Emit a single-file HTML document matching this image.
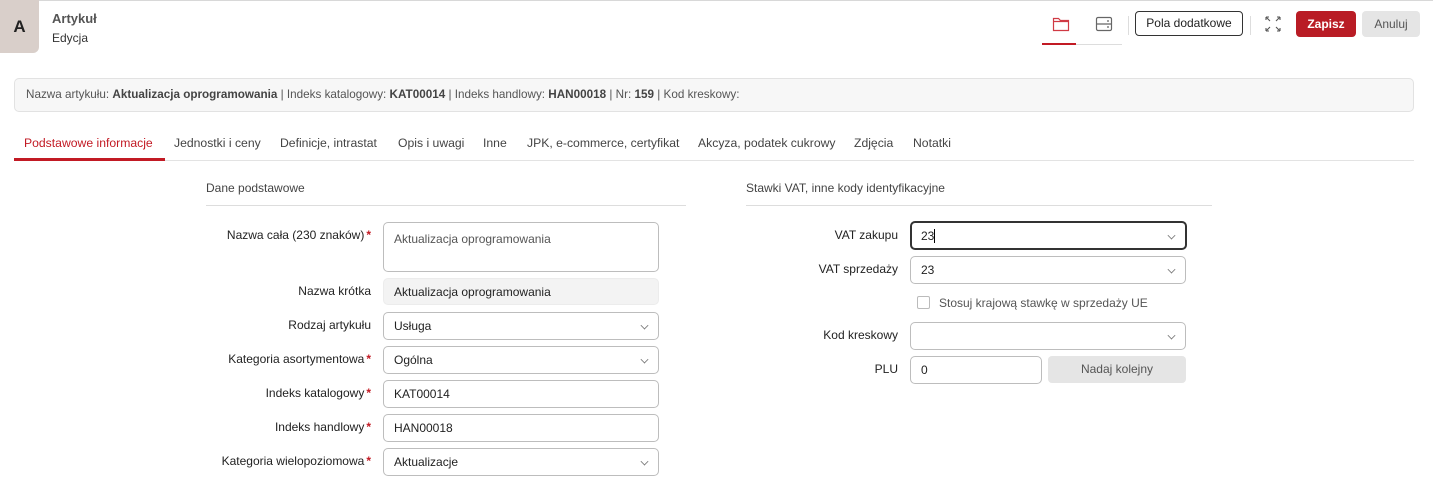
<!DOCTYPE html>
<html><head><meta charset="utf-8"><style>
*{margin:0;padding:0;box-sizing:border-box}
body{width:1433px;height:493px;overflow:hidden;background:#fff;font-family:"Liberation Sans",sans-serif;font-size:12px;color:#333;position:relative}
.a{position:absolute;white-space:nowrap}
.lbl{position:absolute;text-align:right;color:#222;white-space:nowrap}
.req{color:#c21a24;font-weight:bold;margin-left:2px}
.in{position:absolute;border:1px solid #bdbdbd;border-radius:5px;background:#fff;padding-left:10px;display:flex;align-items:center;color:#222}
.chev{position:absolute;right:10px;top:50%;margin-top:-4px;width:7px;height:7px;border-right:1px solid #777;border-bottom:1px solid #777;transform:rotate(45deg) scale(.8)}
.tab{position:absolute;top:136px;color:#444;font-size:12.2px}
</style></head><body>
<div class="a" style="left:0;top:0;width:1433px;height:1px;background:#d8d8d8"></div>
<div class="a" style="left:0;top:0;width:39px;height:53px;background:#d9cfca;border-bottom-right-radius:6px;font-weight:bold;font-size:17px;color:#222;text-align:center;line-height:53px">A</div>
<div class="a" style="left:52px;top:11px;font-weight:bold;font-size:13px;color:#555">Artykuł</div>
<div class="a" style="left:52px;top:31px;font-size:12px;color:#333">Edycja</div>

<svg class="a" style="left:1052px;top:16px" width="18" height="16" viewBox="0 0 18 16"><path d="M1.5 2.5h5l2 2h8v10h-15z M1.5 5.5h15" fill="none" stroke="#d03a44" stroke-width="1.2"/></svg>
<svg class="a" style="left:1095px;top:16px" width="18" height="16" viewBox="0 0 18 16"><rect x="1.5" y="1.5" width="15" height="13" rx="1.5" fill="none" stroke="#666" stroke-width="1.2"/><path d="M1.5 8h15M12 5h2M12 11h2" stroke="#666" stroke-width="1.2"/></svg>
<div class="a" style="left:1042px;top:43px;width:34px;height:2px;background:#c21a24"></div>
<div class="a" style="left:1076px;top:44px;width:46px;height:1px;background:#ddd"></div>
<div class="a" style="left:1128px;top:16px;width:1px;height:19px;background:#ddd"></div>
<div class="a" style="left:1135px;top:11px;width:108px;height:25px;border:1px solid #333;border-radius:4px;text-align:center;line-height:23px;font-size:12px;color:#222">Pola dodatkowe</div>
<div class="a" style="left:1250px;top:16px;width:1px;height:19px;background:#ddd"></div>
<svg class="a" style="left:1264px;top:15px" width="18" height="18" viewBox="0 0 18 18"><path d="M2 2l4 4M2 2v3M2 2h3 M16 2l-4 4M16 2v3M16 2h-3 M2 16l4-4M2 16v-3M2 16h3 M16 16l-4-4M16 16v-3M16 16h-3" fill="none" stroke="#555" stroke-width="1.1"/></svg>
<div class="a" style="left:1296px;top:11px;width:60px;height:26px;background:#b91c25;border-radius:4px;color:#fff;font-weight:bold;text-align:center;line-height:26px;font-size:12px">Zapisz</div>
<div class="a" style="left:1362px;top:11px;width:58px;height:26px;background:#e5e5e5;border-radius:4px;color:#555;text-align:center;line-height:26px;font-size:12px">Anuluj</div>

<div class="a" style="left:14px;top:78px;width:1400px;height:34px;background:#f7f7f7;border:1px solid #e2e2e2;border-radius:5px;padding-left:11px;line-height:32px;font-size:11.7px;color:#555">Nazwa artykułu: <b style="color:#444">Aktualizacja oprogramowania</b> | Indeks katalogowy: <b style="color:#444">KAT00014</b> | Indeks handlowy: <b style="color:#444">HAN00018</b> | Nr: <b style="color:#444">159</b> | Kod kreskowy:</div>

<div class="tab" style="left:24px;color:#c21a24">Podstawowe informacje</div>
<div class="tab" style="left:174px">Jednostki i ceny</div>
<div class="tab" style="left:280px">Definicje, intrastat</div>
<div class="tab" style="left:398px">Opis i uwagi</div>
<div class="tab" style="left:483px">Inne</div>
<div class="tab" style="left:527px">JPK, e-commerce, certyfikat</div>
<div class="tab" style="left:698px">Akcyza, podatek cukrowy</div>
<div class="tab" style="left:854px">Zdjęcia</div>
<div class="tab" style="left:913px">Notatki</div>
<div class="a" style="left:14px;top:160px;width:1400px;height:1px;background:#e3e3e3"></div>
<div class="a" style="left:14px;top:158px;width:151px;height:3px;background:#c21a24"></div>

<div class="a" style="left:206px;top:181px;color:#444">Dane podstawowe</div>
<div class="a" style="left:206px;top:205px;width:480px;height:1px;background:#ddd"></div>
<div class="a" style="left:746px;top:181px;color:#444">Stawki VAT, inne kody identyfikacyjne</div>
<div class="a" style="left:746px;top:205px;width:466px;height:1px;background:#ddd"></div>

<div class="lbl" style="right:1062px;top:228px">Nazwa cała (230 znaków)<span class="req">*</span></div>
<div class="in" style="left:383px;top:222px;width:276px;height:50px;align-items:flex-start;padding-top:9px;color:#555">Aktualizacja oprogramowania</div>
<div class="lbl" style="right:1062px;top:284px">Nazwa krótka</div>
<div class="in" style="left:383px;top:278px;width:276px;height:27px;background:#f3f3f3;border-color:#ececec">Aktualizacja oprogramowania</div>
<div class="lbl" style="right:1062px;top:318px">Rodzaj artykułu</div>
<div class="in" style="left:383px;top:312px;width:276px;height:28px">Usługa<span class="chev"></span></div>
<div class="lbl" style="right:1062px;top:352px">Kategoria asortymentowa<span class="req">*</span></div>
<div class="in" style="left:383px;top:346px;width:276px;height:28px">Ogólna<span class="chev"></span></div>
<div class="lbl" style="right:1062px;top:386px">Indeks katalogowy<span class="req">*</span></div>
<div class="in" style="left:383px;top:380px;width:276px;height:28px">KAT00014</div>
<div class="lbl" style="right:1062px;top:420px">Indeks handlowy<span class="req">*</span></div>
<div class="in" style="left:383px;top:414px;width:276px;height:28px">HAN00018</div>
<div class="lbl" style="right:1062px;top:454px">Kategoria wielopoziomowa<span class="req">*</span></div>
<div class="in" style="left:383px;top:448px;width:276px;height:28px">Aktualizacje<span class="chev"></span></div>

<div class="lbl" style="right:535px;top:228px">VAT zakupu</div>
<div class="in" style="left:910px;top:221px;width:277px;height:29px;border:2px solid #333;padding-left:9px">23<span style="display:inline-block;width:1px;height:14px;background:#000"></span><span class="chev"></span></div>
<div class="lbl" style="right:535px;top:262px">VAT sprzedaży</div>
<div class="in" style="left:910px;top:256px;width:276px;height:28px">23<span class="chev"></span></div>
<div class="a" style="left:917px;top:296px;width:13px;height:13px;border:1px solid #bbb;border-radius:2px"></div>
<div class="a" style="left:939px;top:296px;color:#555">Stosuj krajową stawkę w sprzedaży UE</div>
<div class="lbl" style="right:535px;top:328px">Kod kreskowy</div>
<div class="in" style="left:910px;top:322px;width:276px;height:28px"><span class="chev"></span></div>
<div class="lbl" style="right:535px;top:362px">PLU</div>
<div class="in" style="left:910px;top:356px;width:132px;height:28px">0</div>
<div class="a" style="left:1048px;top:356px;width:138px;height:27px;background:#e5e5e5;border-radius:4px;text-align:center;line-height:27px;color:#555">Nadaj kolejny</div>
</body></html>
